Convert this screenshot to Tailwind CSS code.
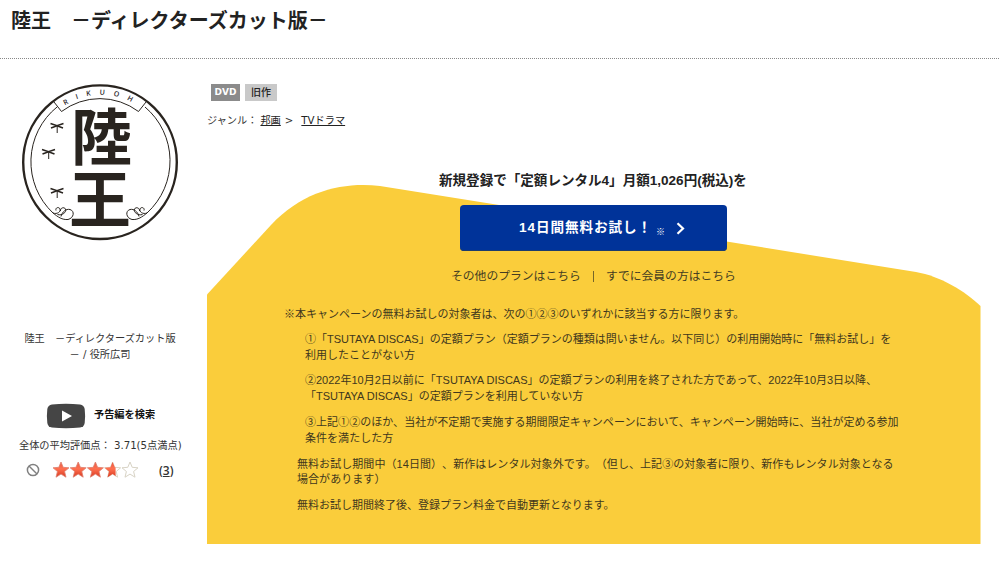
<!DOCTYPE html>
<html lang="ja">
<head>
  <meta charset="UTF-8" />
  <meta name="viewport" content="width=device-width, initial-scale=1.0"/>
  <title>陸王　－ディレクターズカット版－</title>
  <script src="https://cdn.jsdelivr.net/npm/@tailwindcss/browser@4"></script>
</head>
<body class="bg-white text-[#333] overflow-hidden [text-spacing-trim:space-all] font-['Liberation_Sans','Noto_Sans_CJK_JP',sans-serif]">

  <!-- Title -->
  <header class="h-[59px] pl-[11px] pt-[5px] border-b border-dotted border-[#888]">
    <h1 class="text-[20px] leading-[30px] font-bold text-[#222] whitespace-nowrap font-['Noto_Sans_CJK_JP',sans-serif]">陸王　－ディレクターズカット版－</h1>
  </header>

  <main class="flex">
    <!-- Left column -->
    <aside class="w-[207px] shrink-0 pt-6 text-[10.2px] leading-4 font-['DejaVu_Sans','Noto_Sans_CJK_JP',sans-serif]">
      <svg class="block ml-[21px]" width="158" height="159" viewBox="21 83 158 159" fill="none" stroke="#29241f">
        <circle cx="100" cy="162.200" r="76.800" stroke-width="2.400"/>
        <path d="M57 107A70.500 70.500 0 0 0 53 213M145 107A70.500 70.500 0 0 1 147 213" stroke-width="1"/>
        <path d="M54 102l7.500 9.500A64 64 0 0 1 138.500 111.500L146 102" stroke-width="1"/>
        <path id="arc" d="M65 105.500A66.500 66.500 0 0 1 146 112" stroke="none"/>
        <text fill="#29241f" stroke="none" font-family="Open Sans" font-size="7" font-weight="600" letter-spacing="8.500"><textPath href="#arc">RIKUOH</textPath></text>
        <g fill="#29241f" stroke="none" font-family="Noto Sans CJK JP" font-weight="700">
          <text x="71" y="160" font-size="61">陸</text>
          <text x="69" y="223" font-size="62">王</text>
        </g>
        <!-- Dragonflies -->
        <g id="fly">
          <path d="M50.500 123.500l6.500 2.200 6.500-2.200M51 128l6-2.200 6 2.200" stroke-width="1.600"/>
          <path d="M57.200 125v8" stroke-width="1"/>
        </g>
        <use href="#fly" x="-8.500" y="26"/>
        <use href="#fly" y="65"/>
        <!-- Clouds -->
        <g stroke-width="1">
          <path id="cloud" d="M53 213C57 214.500 61 212 60 209C59 206.500 55 207.500 56 210.500M57.500 214.500C62 216 67 212 65.500 209C64 206.500 60 208 60.500 211M61 216.500C62 212 66 208.500 70 209.500C75 211 74 218 68 219.500C62 220 58 217 53 213"/>
          <use href="#cloud" transform="matrix(-1 0 0 1 200 0)"/>
        </g>
      </svg>
      <p class="mt-[89px] pr-[7px] text-center whitespace-nowrap">陸王　－ディレクターズカット版<br>－ / 役所広司</p>

      <div class="mt-10 ml-[46px] flex items-center h-[26px]">
        <svg width="40" height="26" viewBox="0 0 40 26">
          <path d="M6 1.500Q20 0 34 1.500Q38 2 38.700 6Q39.500 13 38.700 20Q38 24 34 24.500Q20 26 6 24.500Q2 24 1.300 20Q.5 13 1.300 6Q2 2 6 1.500Z" fill="#454545"/>
          <path d="M16 7.500L26 13L16 18.500Z" fill="#fff"/>
        </svg>
        <span class="ml-2 mb-0.5 font-bold text-[#111] whitespace-nowrap">予告編を検索</span>
      </div>
      <p class="mt-[9px] ml-[19px] whitespace-nowrap">全体の平均評価点： 3.71(5点満点)</p>
      <div class="mt-[7px] ml-[26px] flex items-center h-[18px]">
        <svg width="14" height="14" viewBox="0 0 14 14" fill="none" stroke="#808080" stroke-width="1.500"><circle cx="7" cy="7" r="5.600"/><path d="M3 3l8 8"/></svg>
        <svg class="ml-3" width="88" height="18" viewBox="0 0 88 18">
          <defs>
            <linearGradient id="red" x2="0" y2="1"><stop offset="0" stop-color="#e85b43"/><stop offset=".45" stop-color="#ff7050"/><stop offset="1" stop-color="#d83a21"/></linearGradient>
            <path id="star" d="M9 1l2.200 5.300 5.800.5-4.400 3.700 1.400 5.700L9 13.100l-5 3.100 1.400-5.700L1 6.800l5.800-.5Z"/>
            <clipPath id="part"><path d="M0 0h12v18h-12z"/></clipPath>
          </defs>
          <g fill="url(#red)" stroke="#dd8070" stroke-width=".8">
            <use href="#star"/><use href="#star" x="17.200"/><use href="#star" x="34.400"/>
          </g>
          <g transform="translate(51.600)"><use href="#star" fill="#fff" stroke="#ddd5c5"/><use href="#star" fill="url(#red)" clip-path="url(#part)"/></g>
          <use href="#star" x="69" fill="#fff" stroke="#d8d3c5"/>
        </svg>
        <span class="ml-[19px] mt-0.5 text-xs font-semibold text-[#333] font-['Open_Sans',sans-serif]">(<span class="underline">3</span>)</span>
      </div>
    </aside>

    <!-- Right column -->
    <section class="w-[774px] shrink-0">
      <div class="pt-[25px] pl-1 flex gap-[5px] text-[10px] leading-[17px] text-center font-['DejaVu_Sans','Noto_Sans_CJK_JP',sans-serif]">
        <span class="w-[29px] h-[17px] bg-[#8b8b8b] text-white font-bold text-[9px]">DVD</span>
        <span class="w-8 h-[17px] bg-[#c9c9c9] text-[#222] font-medium">旧作</span>
      </div>
      <p class="mt-3 text-[10.200px] leading-4 whitespace-nowrap font-['DejaVu_Sans','Noto_Sans_CJK_JP',sans-serif]">ジャンル：<a class="ml-[3px] underline text-[#222]">邦画</a><span class="ml-1">&gt;</span><a class="ml-2 underline text-[#222]">TVドラマ</a></p>

      <!-- Campaign -->
      <div class="relative mt-[39px] h-[376px]">
        <svg class="absolute left-0 top-4" width="774" height="360" viewBox="207 184 774 360">
          <path d="M207 294.500L271 225C304 190 344 182 380 186L916 272C940 276 965 291 980.500 306V544.500H207Z" fill="#facd3b"/>
        </svg>
        <div class="relative">
          <h2 class="pl-[232px] pt-[3px] text-[13.550px] leading-5 font-bold text-[#222] whitespace-nowrap">新規登録で「定額レンタル4」月額1,026円(税込)を</h2>
          <a class="ml-[253px] mt-[14px] w-[267px] h-[46px] flex items-center pl-[59px] rounded-[4px] bg-[#003399] text-white shadow-[inset_0_-1px_0_#1b3c6e]">
            <span class="text-[13.600px] leading-5 font-bold tracking-[0.900px] -mt-px whitespace-nowrap w-[137px]">14日間無料お試し！</span>
            <span class="text-[9px] leading-4 mt-2">※</span>
            <svg class="ml-[11px]" width="9" height="13" viewBox="0 0 9 13" fill="none" stroke="#fff" stroke-width="2.200"><path d="M1.500 1.300L7 6.500L1.500 11.700"/></svg>
          </a>
          <p class="ml-[244px] mt-[15px] flex text-[11.800px] leading-5 whitespace-nowrap text-[#443c22]"><span class="w-[142px]">その他のプランはこちら</span><span class="self-center mt-px mr-3 w-px h-[11px] bg-[#756529]"></span><span>すでに会員の方はこちら</span></p>

          <div class="pl-[77px] mt-[21px] text-[11px] leading-[15.800px] text-[#3f371d] whitespace-nowrap">
            <p>※本キャンペーンの無料お試しの対象者は、次の①②③のいずれかに該当する方に限ります。</p>
            <div class="ml-[21px] mt-[9px] flex flex-col gap-2.5">
              <p>①「TSUTAYA DISCAS」の定額プラン（定額プランの種類は問いません。以下同じ）の利用開始時に「無料お試し」を<br>利用したことがない方</p>
              <p>②2022年10月2日以前に「TSUTAYA DISCAS」の定額プランの利用を終了された方であって、2022年10月3日以降、<br>「TSUTAYA DISCAS」の定額プランを利用していない方</p>
              <p class="tracking-[0.040px]">③上記①②のほか、当社が不定期で実施する期間限定キャンペーンにおいて、キャンペーン開始時に、当社が定める参加<br>条件を満たした方</p>
            </div>
            <p class="ml-[13px] mt-2.5 tracking-[0.060px]">無料お試し期間中（14日間）、新作はレンタル対象外です。（但し、上記③の対象者に限り、新作もレンタル対象となる<br>場合があります）</p>
            <p class="ml-[13px] mt-2.5">無料お試し期間終了後、登録プラン料金で自動更新となります。</p>
          </div>
        </div>
      </div>
    </section>
  </main>
</body>
</html>
